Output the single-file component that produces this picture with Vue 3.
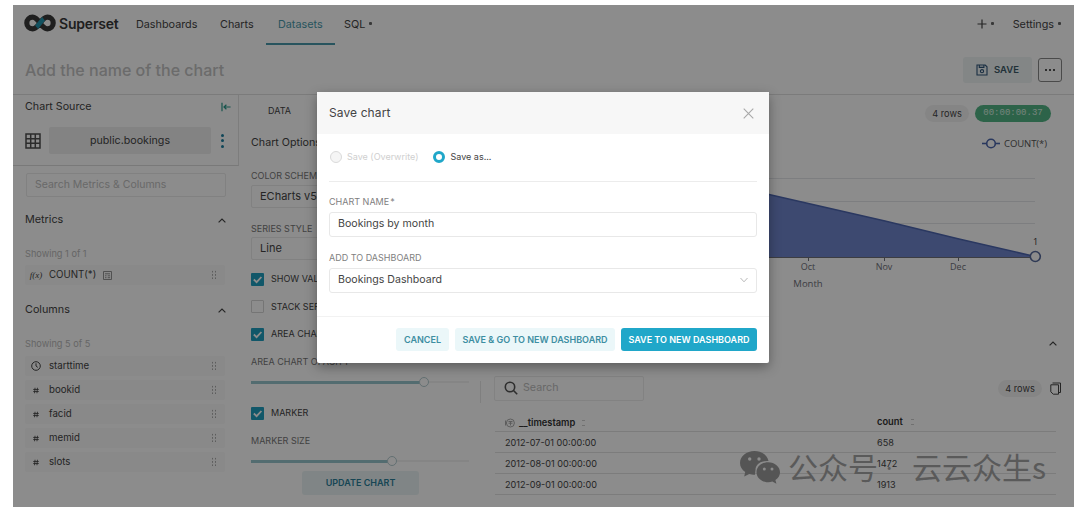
<template>
  <div class="frame">
    <header class="navbar">
      <svg class="logo" viewBox="0 0 32 18" width="32" height="18">
        <path d="M16 9 C12.5 4 10.800 3.200 8.600 3.200 a5.800 5.800 0 0 0 0 11.600 C10.800 14.800 12.500 14 16 9 C19.500 4 21.200 3.200 23.400 3.200 a5.800 5.800 0 0 1 0 11.600 C21.200 14.800 19.500 14 16 9 Z" fill="none" stroke="#3a3a3a" stroke-width="5.2" />
        <path d="M12.600 13.200 C14 12 18 6 19.600 4.800" fill="none" stroke="#2294ae" stroke-width="4.6" />
      </svg>
      <span class="brand">Superset</span>
      <nav class="menu">
        <a v-for="item in menu" :key="item.label" :class="['menu-item', item.key, { active: item.active }]">
          {{ item.label }}<i v-if="item.caret" class="caret"></i>
        </a>
      </nav>
      <div class="menu-right">
        <span class="plus"><svg viewBox="0 0 10 10" width="10" height="10"><path d="M5 .5v9M.5 5h9" stroke="#444" stroke-width="1.2" /></svg><i class="caret"></i></span>
        <span>Settings<i class="caret"></i></span>
      </div>
    </header>

    <div class="title-bar">
      <span class="chart-title">Add the name of the chart</span>
      <button class="btn-save">
        <svg viewBox="0 0 12 12" width="12" height="12" fill="none" stroke="#2f5578" stroke-width="1.1">
          <path d="M1 1h8.200L11 2.800V11H1zM3.300 1v2.400h4.600V1" />
          <circle cx="6" cy="7.2" r="1.6" />
        </svg>
        SAVE
      </button>
      <button class="btn-more"><i></i><i></i><i></i></button>
    </div>

    <div class="body">
      <aside class="source">
        <div class="source-head">
          <div class="source-title">
            <span>Chart Source</span>
            <svg viewBox="0 0 10 10" width="10" height="10" fill="none" stroke="#2a9a8c" stroke-width="1.2"><path d="M1 .8v8.400M3 5h6.600M5.400 2.800 3 5l2.400 2.200" /></svg>
          </div>
          <div class="dataset">
            <svg viewBox="0 0 16 16" width="16" height="16" fill="none" stroke="#505050" stroke-width="1.5"><path d="M1 1h14v14H1zM1 5.700h14M1 10.300h14M5.700 1v14M10.300 1v14" /></svg>
            <span class="dataset-name">public.bookings</span>
            <span class="dots"><i></i><i></i><i></i></span>
          </div>
        </div>
        <div class="source-search">Search Metrics &amp; Columns</div>

        <div class="section-head metrics">
          <span>Metrics</span>
          <svg class="chevron" viewBox="0 0 8 5" width="8" height="5"><path d="M.6 4.400 4 1l3.400 3.400" /></svg>
        </div>
        <p class="showing">Showing 1 of 1</p>
        <div class="field metric">
          <span class="field-icon fx">f(x)</span>
          <span>COUNT(*)</span>
          <svg class="calc" viewBox="0 0 9 9" width="9" height="9" fill="none" stroke="#888" stroke-width=".9"><path d="M.5.5h8v8h-8zM2 2.800h5M2 4.800h1.500M4.700 4.800h2.400M2 6.700h1.500M4.700 6.700h2.400" /></svg>
          <span class="grip"></span>
        </div>

        <div class="section-head columns">
          <span>Columns</span>
          <svg class="chevron" viewBox="0 0 8 5" width="8" height="5"><path d="M.6 4.400 4 1l3.400 3.400" /></svg>
        </div>
        <p class="showing">Showing 5 of 5</p>
        <div class="fields">
          <div v-for="col in columns" :key="col.name" class="field">
            <span class="field-icon">
              <svg v-if="col.time" viewBox="0 0 10 10" width="10" height="10" fill="none" stroke="#444" stroke-width="1"><circle cx="5" cy="5" r="4.3" /><path d="M5 2.300V5l1.800 1.400" /></svg>
              <svg v-else viewBox="0 0 7 7" width="6" height="7" fill="none" stroke="#444" stroke-width="1"><path d="M2.400.3 1.800 6.700M5.200.3 4.600 6.700M.3 2.300h6.400M.3 4.700h6.400" /></svg>
            </span>
            <span>{{ col.name }}</span>
            <span class="grip"></span>
          </div>
        </div>
      </aside>

      <section class="controls">
        <div class="tab">DATA</div>
        <div class="group-title">Chart Options</div>
        <label class="ctl-label">COLOR SCHEME</label>
        <div class="select">ECharts v5.x</div>
        <label class="ctl-label style-label">SERIES STYLE</label>
        <div class="select">Line</div>
        <div class="check-row first"><span class="check on"><svg viewBox="0 0 13 13"><path d="M2.800 6.500 5.600 9.200 10.400 4" /></svg></span>SHOW VALUE</div>
        <div class="check-row"><span class="check"></span>STACK SERIES</div>
        <div class="check-row"><span class="check on"><svg viewBox="0 0 13 13"><path d="M2.800 6.500 5.600 9.200 10.400 4" /></svg></span>AREA CHART</div>
        <div class="slider-label">AREA CHART OPACITY</div>
        <div class="slider"><span class="track" :style="{ width: '80%' }"></span><span class="knob"></span></div>
        <div class="check-row marker"><span class="check on"><svg viewBox="0 0 13 13"><path d="M2.800 6.500 5.600 9.200 10.400 4" /></svg></span>MARKER</div>
        <div class="slider-label size">MARKER SIZE</div>
        <div class="slider"><span class="track" :style="{ width: '65%' }"></span><span class="knob"></span></div>
        <button class="btn-update">UPDATE CHART</button>
      </section>

      <div class="gutter"><i></i></div>

      <main class="main">
        <div class="status">
          <span class="rows-pill">4 rows</span>
          <span class="timer">00:00:00.37</span>
        </div>
        <svg class="chart" viewBox="485 130 588 198" width="588" height="198">
          <g stroke="#e4e6ea" stroke-width="1">
            <path v-for="y in gridLines" :key="y" :d="`M505 ${y}.5H1035`" />
          </g>
          <path d="M505 132 769 194.5 885 221 959 239 1035 256.5V257H505z" fill="#6f86cc" />
          <path d="M505 132 769 194.5 885 221 959 239 1035 256.5" fill="none" stroke="#4e66b0" stroke-width="1.5" />
          <path d="M505 257.5H1035" stroke="#6e7079" />
          <g v-for="tick in ticks" :key="tick.label">
            <path :d="`M${tick.x}.5 257v4`" stroke="#6e7079" />
            <text :x="tick.x" y="270" text-anchor="middle">{{ tick.label }}</text>
          </g>
          <text x="808" y="286.5" text-anchor="middle" class="axis-name">Month</text>
          <circle cx="1035.3" cy="256.5" r="5" fill="#fff" stroke="#566a9c" stroke-width="1.6" />
          <text x="1035.5" y="245" text-anchor="middle" class="point">1</text>
          <path d="M982 143.500h18" stroke="#4c66ac" stroke-width="1.6" />
          <circle cx="991" cy="143.5" r="4.3" fill="#fff" stroke="#4c66ac" stroke-width="1.6" />
          <text x="1004" y="147" class="legend" textLength="43">COUNT(*)</text>
        </svg>
        <div class="panel-toggle">
          <svg class="chevron" viewBox="0 0 8 5" width="8" height="5"><path d="M.6 4.400 4 1l3.400 3.400" /></svg>
        </div>
        <div class="results-bar">
          <div class="results-search">
            <svg viewBox="0 0 14 14" width="14" height="14" fill="none" stroke="#555" stroke-width="1.6"><circle cx="6" cy="6" r="4.7" /><path d="m9.500 9.500 3.700 3.700" /></svg>
            Search
          </div>
          <span class="rows-pill">4 rows</span>
          <svg class="copy" viewBox="0 0 11 13" width="11" height="13" fill="none" stroke="#444" stroke-width="1"><path d="M2.500 1h8v9.500H9" /><path d="M.8 2.800h7.700v9.400H3.300L.8 9.800z" /></svg>
        </div>
        <div class="table">
          <div class="tr th">
            <span class="stamp">
              <svg viewBox="0 0 10 10" width="10" height="10" fill="none" stroke="#aaa" stroke-width="1"><circle cx="5.4" cy="5" r="4" /><path d="M.5 2.500v5M3.500 3.500h4M3.500 5.200h4M5.500 3v4.500" /></svg>
              __timestamp<i class="sort"></i>
            </span>
            <span>count<i class="sort"></i></span>
          </div>
          <div v-for="row in rows" :key="row.time" class="tr">
            <span>{{ row.time }}</span>
            <span>{{ row.count }}</span>
          </div>
        </div>
      </main>
    </div>

    <div class="mask"></div>

    <div class="modal">
      <div class="modal-head">
        <span>Save chart</span>
        <svg viewBox="0 0 11 11" width="11" height="11"><path d="m.7.7 9.600 9.600M10.300.7.7 10.300" stroke="#a8a8a8" stroke-width="1.1" /></svg>
      </div>
      <div class="modal-body">
        <div class="radios">
          <span class="radio disabled"><i></i>Save (Overwrite)</span>
          <span class="radio"><i></i>Save as...</span>
        </div>
        <label class="form-label">CHART NAME<b>*</b></label>
        <div class="input">{{ chartName }}</div>
        <label class="form-label second">ADD TO DASHBOARD</label>
        <div class="input">
          {{ dashboard }}
          <svg viewBox="0 0 8 6" width="8" height="6"><path d="M.5 1 4 4.800 7.500 1" fill="none" stroke="#b8b8b8" /></svg>
        </div>
      </div>
      <div class="modal-foot">
        <button class="btn cancel">CANCEL</button>
        <button class="btn go">SAVE &amp; GO TO NEW DASHBOARD</button>
        <button class="btn primary">SAVE TO NEW DASHBOARD</button>
      </div>
    </div>

    <div class="watermark">
      <svg viewBox="0 0 40 33" width="40" height="33">
        <path d="M14.500 0C6.500 0 0 5.400 0 12c0 3.700 2 6.900 5.200 9.100L4.200 25.500l5-2.600c1.700.5 3.500.8 5.800.8L15.500 19c0-6 5.500-9.500 13-9C27.500 4 21.500 0 14.500 0z" />
        <path d="M28.200 11.200c-6.500 0-11.700 4.500-11.700 10s5.200 10 11.700 10c1.500 0 2.900-.2 4.200-.7l4 2.200-1-3.600c2.800-1.800 4.600-4.700 4.600-7.900 0-5.500-5.300-10-11.800-10z" />
        <g class="eyes"><circle cx="9.7" cy="8" r="1.7" /><circle cx="19" cy="8" r="1.7" /><circle cx="24.3" cy="18" r="1.5" /><circle cx="32" cy="18" r="1.5" /></g>
      </svg>
      <span class="wm-kind">公众号</span>
      <span class="wm-dot">·</span>
      <span class="wm-name">云云众生s</span>
    </div>
  </div>
</template>

<script setup>
import { ref } from 'vue'

const chartName = ref('Bookings by month')
const dashboard = ref('Bookings Dashboard')

const menu = [
  { label: 'Dashboards', key: 'dashboards' },
  { label: 'Charts', key: 'charts' },
  { label: 'Datasets', key: 'datasets', active: true },
  { label: 'SQL', key: 'sql', caret: true }
]

const columns = [
  { name: 'starttime', time: true },
  { name: 'bookid' },
  { name: 'facid' },
  { name: 'memid' },
  { name: 'slots' }
]

const gridLines = [178, 201, 223]

const ticks = [
  { label: 'Oct', x: 808 },
  { label: 'Nov', x: 884 },
  { label: 'Dec', x: 958 }
]

const rows = [
  { time: '2012-07-01 00:00:00', count: 658 },
  { time: '2012-08-01 00:00:00', count: 1472 },
  { time: '2012-09-01 00:00:00', count: 1913 }
]
</script>

<style>
body {
  background: #fff;
}
</style>

<style scoped>
* {
  box-sizing: border-box;
}

.frame {
  position: relative;
  width: 1061px;
  height: 502px;
  margin: 5px 0 0 13px;
  overflow: hidden;
  background: #fff;
  color: #444;
  font-family: Inter, "Liberation Sans", sans-serif;
  font-size: 10px;
  line-height: 12px;
}

button {
  border: 0;
  padding: 0;
  font: inherit;
  color: inherit;
}

svg {
  flex: none;
}

.caret {
  display: inline-block;
  width: 3px;
  height: 3px;
  margin-left: 4px;
  border-radius: 1px;
  background: #666;
  vertical-align: 3px;
}

.chevron {
  fill: none;
  stroke: #444;
  stroke-width: 1.2;
}

/* top navigation */
.navbar {
  display: flex;
  align-items: center;
  height: 40px;
  padding: 0 13px 0 11px;
  font-size: 10.800px;
}

.logo {
  margin-bottom: 4px;
}

.brand {
  width: 62px;
  margin: 0 0 2px 3px;
  font-size: 14px;
  font-weight: 600;
  letter-spacing: -0.2px;
  color: #3a3a3a;
}

.menu {
  display: flex;
  height: 40px;
  margin-left: 3px;
}

.menu-item {
  padding: 0 12px;
  line-height: 40px;
  white-space: nowrap;
}

.menu-item.dashboards {
  width: 84px;
}

.menu-item.charts {
  width: 58px;
}

.menu-item.datasets {
  width: 69px;
}

.menu-item.sql {
  padding-left: 9px;
}

.menu-item.active {
  border-bottom: 2px solid #4a9aab;
  color: #4a9aab;
}

.menu-right {
  display: flex;
  gap: 19px;
  margin-left: auto;
}

.plus svg {
  vertical-align: -1px;
}

/* chart name row */
.title-bar {
  display: flex;
  align-items: center;
  height: 50px;
  padding: 0 12px;
  border-bottom: 1px solid #e0e0e0;
}

.chart-title {
  margin-right: auto;
  font-size: 16px;
  font-weight: 500;
  color: #c4c4c4;
}

.btn-save {
  display: flex;
  align-items: center;
  justify-content: center;
  gap: 6px;
  width: 69px;
  height: 26px;
  margin-right: 6px;
  border-radius: 3px;
  background: #eef4f5;
  font-size: 9.500px;
  font-weight: 600;
  color: #3c5a68;
}

.btn-more {
  display: flex;
  align-items: center;
  justify-content: center;
  gap: 2px;
  width: 24px;
  height: 24px;
  border: 1px solid #888;
  border-radius: 3px;
  background: transparent;
}

.btn-more i {
  width: 2px;
  height: 2px;
  background: #555;
}

.body {
  display: flex;
  height: 412px;
}

/* chart source column */
.source {
  width: 226px;
  flex: none;
}

.source-head {
  height: 71px;
  padding: 6px 0 0 12px;
  border-right: 1px solid #e4e4e4;
  border-bottom: 1px solid #dcdcdc;
}

.source-title {
  display: flex;
  align-items: center;
  justify-content: space-between;
  padding-right: 7px;
  font-size: 10.700px;
}

.dataset {
  display: flex;
  align-items: center;
  margin-top: 14px;
}

.dataset-name {
  width: 162px;
  margin-left: 8px;
  border-radius: 2px;
  background: #efefef;
  font-size: 10.700px;
  line-height: 27px;
  text-align: center;
}

.dots {
  display: flex;
  flex-direction: column;
  gap: 2.500px;
  margin-left: 10px;
}

.dots i {
  width: 3px;
  height: 3px;
  border-radius: 50%;
  background: #1d7fa0;
}

.source-search {
  width: 200px;
  height: 24px;
  margin: 7px 0 0 13px;
  padding-left: 8px;
  border: 1px solid #ebebeb;
  border-radius: 2px;
  font-size: 10.500px;
  line-height: 22px;
  color: #c0c0c0;
}

.section-head {
  display: flex;
  align-items: center;
  justify-content: space-between;
  padding: 0 13px 0 12px;
  font-size: 10.800px;
}

.metrics {
  margin-top: 17px;
}

.columns {
  margin-top: 19px;
}

.showing {
  margin: 22px 0 0 12px;
  font-size: 9.200px;
  color: #bababa;
}

.field {
  display: flex;
  align-items: center;
  width: 200px;
  height: 20px;
  margin-left: 12px;
  padding-right: 9px;
  border-radius: 2px;
  background: #f9f9f9;
  font-size: 9.700px;
}

.field.metric {
  margin-top: 5px;
}

.fields {
  display: flex;
  flex-direction: column;
  gap: 4px;
  margin-top: 6px;
}

.field-icon {
  display: flex;
  justify-content: center;
  width: 22px;
  margin-right: 2px;
}

.fx {
  font-family: "Liberation Serif", serif;
  font-size: 9px;
  font-style: italic;
}

.calc {
  margin-left: 7px;
}

.grip {
  width: 5px;
  height: 10px;
  margin-left: auto;
  background: radial-gradient(circle, #aaa 0.7px, transparent 0.9px) 0 0 / 3px 3.300px;
}

/* control column */
.controls {
  width: 241px;
  flex: none;
  padding-left: 12px;
}

.tab {
  padding: 10px 0 0 17px;
  font-size: 9px;
}

.group-title {
  margin-top: 20px;
  font-size: 10.700px;
}

.ctl-label {
  display: block;
  margin-top: 21px;
  font-size: 9px;
  color: #777;
}

.style-label {
  margin-top: 15px;
}

.select {
  width: 218px;
  height: 23px;
  margin-top: 3px;
  padding-left: 8px;
  border: 1px solid #ebebeb;
  border-radius: 2px;
  font-size: 11px;
  line-height: 20px;
}

.style-label + .select {
  margin-top: 2px;
}

.check-row {
  display: flex;
  align-items: center;
  height: 14px;
  margin-top: 13.500px;
  font-size: 9px;
}

.check-row.first {
  margin-top: 12px;
}

.check {
  width: 13px;
  height: 13px;
  margin-right: 7px;
  border: 1px solid #d6d6d6;
  border-radius: 1px;
}

.check.on {
  border: 0;
  background: #209fbf;
}

.check svg {
  display: block;
  fill: none;
  stroke: #fff;
  stroke-width: 1.8;
}

.slider-label {
  margin-top: 15px;
  font-size: 9px;
  color: #777;
}

.slider {
  display: flex;
  align-items: center;
  width: 218px;
  height: 10px;
  margin-top: 9px;
  background: linear-gradient(#f2f2f2, #f2f2f2) 0 50% / 100% 2px no-repeat;
}

.track {
  flex: none;
  height: 3px;
  background: #98c5cd;
}

.knob {
  width: 10px;
  height: 10px;
  flex: none;
  margin-left: -6px;
  border: 1.500px solid #b4cbd0;
  border-radius: 50%;
  background: #fff;
}

.check-row.marker {
  margin-top: 19px;
}

.slider-label.size {
  margin-top: 15px;
}

.btn-update {
  display: block;
  width: 117px;
  height: 24px;
  margin: 5px 0 0 51px;
  border-radius: 3px;
  background: #eaf3f5;
  font-size: 9px;
  font-weight: 600;
  color: #2a809a;
}

.gutter {
  display: flex;
  width: 5px;
  flex: none;
  padding-top: 286px;
}

.gutter i {
  width: 1px;
  height: 22px;
  background: #e8e8e8;
}

/* chart and results */
.main {
  display: flex;
  flex-direction: column;
  flex: 1;
  min-width: 0;
}

.status {
  display: flex;
  gap: 6px;
  justify-content: flex-end;
  height: 35px;
  padding: 10px 23px 0 0;
}

.rows-pill {
  width: 44px;
  height: 17px;
  border-radius: 9px;
  background: #f3f3f3;
  font-size: 9.200px;
  line-height: 17px;
  text-align: center;
}

.timer {
  width: 76px;
  height: 17px;
  border-radius: 9px;
  background: #53b585;
  font-family: "Liberation Mono", monospace;
  font-size: 9px;
  line-height: 16px;
  text-align: center;
  color: #d8f0e2;
}

.chart text {
  font-family: "Open Sans", "Noto Sans", sans-serif;
  font-size: 9px;
  fill: #6e7079;
}

.chart .axis-name {
  font-size: 9.500px;
}

.chart .point {
  fill: #333;
}

.chart .legend {
  font-size: 9.500px;
  fill: #555;
}

.panel-toggle {
  display: flex;
  height: 34px;
  align-items: center;
  justify-content: flex-end;
  padding: 0 17px 3px 0;
}

.results-bar {
  display: flex;
  align-items: center;
  height: 52px;
  padding: 0 13px 0 9px;
}

.results-search {
  display: flex;
  align-items: center;
  gap: 5px;
  width: 150px;
  height: 25px;
  margin-right: auto;
  padding-left: 9px;
  border: 1px solid #ededed;
  border-radius: 2px;
  font-size: 10.700px;
  color: #bdbdbd;
}

.copy {
  margin-left: 8px;
}

.table {
  width: 571px;
  padding-left: 10px;
}

.tr {
  display: flex;
  height: 21px;
  padding-left: 10px;
  border-bottom: 1px solid #e2e2e2;
  font-size: 9.100px;
  line-height: 21px;
}

.tr > span {
  width: 372px;
  flex: none;
}

.tr > span + span {
  width: auto;
}

.tr.th {
  height: 18px;
  font-size: 9.300px;
  font-weight: 600;
  line-height: 16px;
  color: #333;
}

.stamp {
  display: flex;
  align-items: center;
  gap: 4px;
}

.sort {
  display: inline-block;
  width: 3px;
  height: 6px;
  margin-left: 8px;
  border: solid #ccc;
  border-width: 1px 0;
}

.stamp .sort {
  margin-left: 3px;
}

.mask {
  position: absolute;
  inset: 0;
  background: rgba(0, 0, 0, 0.45);
}

/* save dialog */
.modal {
  position: absolute;
  top: 87px;
  left: 304px;
  width: 452px;
  height: 271px;
  border-radius: 2px;
  background: #fff;
  box-shadow: 0 4px 12px rgba(0, 0, 0, 0.35);
}

.modal-head {
  display: flex;
  align-items: center;
  justify-content: space-between;
  height: 42px;
  padding: 0 15px 0 12px;
  background: #f7f7f7;
  font-size: 12px;
}

.modal-head span {
  margin-bottom: 1px;
  letter-spacing: 0.1px;
}

.modal-body {
  height: 182px;
  padding: 0 12px;
}

.radios {
  display: flex;
  gap: 14px;
  height: 48px;
  padding-top: 17px;
  border-bottom: 1px solid #ececec;
}

.radio {
  display: flex;
  gap: 5px;
  margin-left: 1px;
  font-size: 9px;
}

.radio i {
  width: 12px;
  height: 12px;
  border: 3.500px solid #20a7c9;
  border-radius: 50%;
}

.radio.disabled {
  color: #cfcfcf;
}

.radio.disabled i {
  border: 1px solid #dadada;
  background: #f5f5f5;
}

.form-label {
  display: block;
  margin-top: 14px;
  font-size: 9px;
  color: #808080;
}

.form-label b {
  margin-left: 1px;
  font-weight: 400;
}

.form-label.second {
  margin-top: 15px;
}

.input {
  display: flex;
  align-items: center;
  justify-content: space-between;
  height: 25px;
  margin-top: 4px;
  padding: 0 8px 1px;
  border: 1px solid #e8e8e8;
  border-radius: 3px;
  font-size: 10.600px;
}

.modal-foot {
  display: flex;
  justify-content: flex-end;
  gap: 6px;
  padding: 11px 12px 0;
  border-top: 1px solid #f2f2f2;
}

.btn {
  height: 23px;
  border-radius: 3px;
  background: #ebf7f9;
  font-size: 9px;
  font-weight: 600;
  white-space: nowrap;
  color: #3d8ea2;
}

.cancel {
  width: 53px;
}

.go {
  width: 160px;
}

.primary {
  width: 136px;
  background: #20a7c9;
  color: #fff;
}

.watermark {
  position: absolute;
  top: 446px;
  left: 727px;
  display: flex;
  color: #5a5a5a;
  font-family: "Noto Sans CJK SC", sans-serif;
  font-size: 30px;
  line-height: 31px;
}

.watermark svg {
  fill: #555;
}

.watermark .eyes {
  fill: #8c8c8c;
}

.wm-kind {
  width: 98px;
  margin-left: 8px;
}

.wm-dot {
  width: 26px;
  font-family: Inter, sans-serif;
  font-size: 22px;
  line-height: 35px;
}
</style>
